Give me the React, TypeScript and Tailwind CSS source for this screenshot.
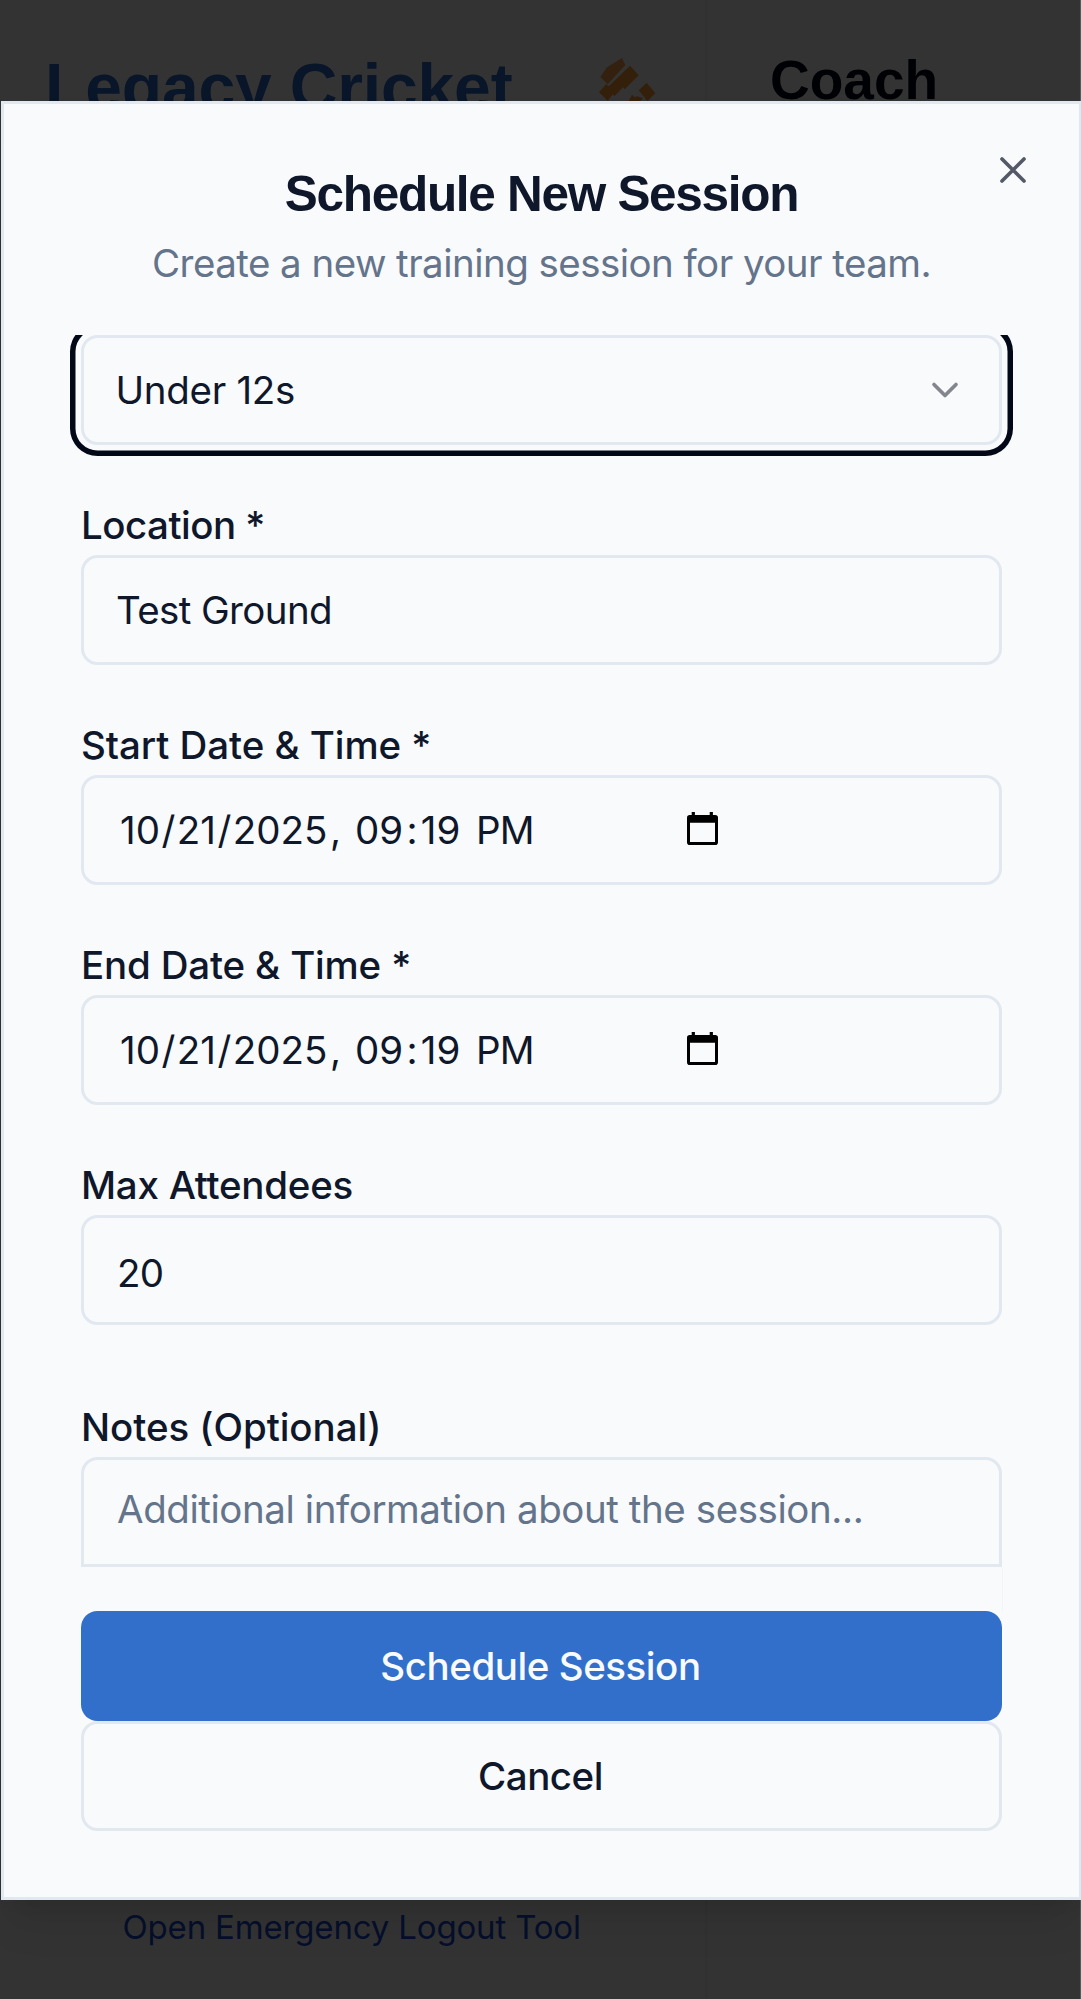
import React from 'react';

const boxBase = 'flex h-[110px] w-full items-center border-[3px] border-[#e2e8f0] bg-[#f9fafc]';

function Field({ label, tracking, children }: { label: string; tracking: string; children: React.ReactNode }) {
  return (
    <div className="flex flex-col gap-[11px]">
      <label className={`h-[38px] text-[38.5px] leading-[38px] font-medium whitespace-pre ${tracking}`}>{label}</label>
      {children}
    </div>
  );
}

function CalendarIcon() {
  return (
    <svg width="31" height="33" viewBox="0 0 31 33" className="mt-[-3px] block shrink-0">
      <path
        fillRule="evenodd"
        d="M4.7 0h3.2v3h14.8V0h3.2v3h2.3a2.8 2.8 0 0 1 2.8 2.8v24.4a2.8 2.8 0 0 1-2.8 2.8H2.8A2.8 2.8 0 0 1 0 30.2V5.8A2.8 2.8 0 0 1 2.8 3h1.9zM3 10.7V30h25V10.7z"
        fill="#000"
      />
    </svg>
  );
}

function DateBox() {
  return (
    <div className={`${boxBase} rounded-[16.5px] pl-[36px] text-[38.5px] leading-[55px]`}>
      <span className="w-[235px] shrink-0 whitespace-nowrap">
        10<span className="mx-[1.5px]">/</span>21<span className="mx-[1.5px]">/</span>2025<span className="ml-[2.5px]">,</span>
      </span>
      <span className="w-[121px] shrink-0 whitespace-nowrap">
        09<span className="mx-[3.3px]">:</span>19
      </span>
      <span className="w-[211px] shrink-0 tracking-[-0.9px]">PM</span>
      <CalendarIcon />
    </div>
  );
}

function CricketIcon() {
  return (
    <svg width="80" height="54" viewBox="0 0 240 162" fill="#ff9b35" className="mt-[50px] block">
      <path fill="#ffa04b" d="M93 24 103 45 50 103 28 81 48 52z" />
      <path d="M117 47 143 76 101 118 96 112 71 138 65 134 50 152 24 127 45 103 54 108z" />
      <path d="M167 98 193 130 169 153 143 121z" />
      <path d="M110 160 123 134 133 143 136 138 156 144 142 160z" />
    </svg>
  );
}

export default function App() {
  return (
    <div className="relative h-[1999px] w-[1081px] overflow-hidden bg-white font-['Inter',sans-serif] text-[#0f172a]">
      <div className="flex h-full">
        <aside className="flex w-[707px] flex-col justify-between border-r-2 border-[#f6f6f6]">
          <div className="flex h-[200px] items-start justify-between pr-[34.5px] pl-[45px]">
            <h1 className="mt-[47px] font-['Liberation_Sans',sans-serif] text-[66px] leading-[80px] font-bold tracking-[-0.15px] whitespace-nowrap text-[#2e6fcb]">
              Legacy Cricket
            </h1>
            <CricketIcon />
          </div>
          <a className="mb-[50px] ml-[122.5px] text-[33px] leading-[44px] tracking-[-0.17px] whitespace-nowrap text-[#1d4ed8]">
            Open Emergency Logout Tool
          </a>
        </aside>
        <section className="pt-[47px] pl-[63px]">
          <h2 className="font-['Liberation_Sans',sans-serif] text-[55px] leading-[66px] font-bold text-[#020817]">Coach</h2>
        </section>
      </div>

      <div className="absolute inset-0 flex">
        <div className="flex-1 bg-black/80" />
        <div className="w-px bg-black/65" />
      </div>

      <div
        role="dialog"
        className="absolute top-[101px] left-px flex h-[1799px] w-[1081px] flex-col border-[3px] border-[#e2e8f0] bg-[#f9fafc] px-[77px] pt-[65px] shadow-[0_27px_41px_-8px_rgba(0,0,0,0.1),0_11px_16px_-11px_rgba(0,0,0,0.1)]"
      >
        <button className="absolute top-[44px] right-[44px] block h-[44px] w-[44px]">
          <svg width="44" height="44" viewBox="0 0 24 24" fill="none" stroke="#535966" strokeWidth="2" strokeLinecap="round" className="block">
            <path d="M18 6 6 18M6 6l12 12" />
          </svg>
        </button>
        <header className="flex w-[921px] shrink-0 flex-col text-center">
          <h2 className="font-['Liberation_Sans',sans-serif] text-[49.5px] leading-[50px] font-bold tracking-[-1.29px] whitespace-nowrap">
            Schedule New Session
          </h2>
          <p className="mt-[17px] text-[38.5px] leading-[55px] tracking-[-0.545px] whitespace-nowrap text-[#64748b]">
            Create a new training session for your team.
          </p>
        </header>

        <div className="mx-[-20px] mt-[44px] h-[1232px] w-[961px] shrink-0 overflow-hidden px-[20px]">
          <div className="flex flex-col gap-[61px]">
            <div
              className={`${boxBase} justify-between rounded-[16.5px] pr-[32.5px] pl-[31.5px] text-[38.5px] leading-[55px] shadow-[0_0_0_5.5px_#f9fafc,0_0_0_11px_#020817]`}
            >
              <span className="tracking-[-0.3px]">Under 12s</span>
              <svg width="44" height="44" viewBox="0 0 24 24" fill="none" stroke="#83868f" strokeWidth="2" strokeLinecap="round" strokeLinejoin="round" className="block">
                <path d="m6 9 6 6 6-6" />
              </svg>
            </div>
            <Field label="Location *" tracking="tracking-[-0.52px]">
              <div className={`${boxBase} rounded-[16.5px] pl-[32px] text-[38.5px] leading-[55px] tracking-[-0.62px]`}>Test Ground</div>
            </Field>
            <Field label="Start Date & Time *" tracking="tracking-[-0.07px]">
              <DateBox />
            </Field>
            <Field label="End Date & Time *" tracking="tracking-[-0.18px]">
              <DateBox />
            </Field>
            <Field label="Max Attendees" tracking="tracking-[-0.27px]">
              <div className={`${boxBase} rounded-[16.5px] pt-[6px] pl-[33px] text-[38.5px] leading-[55px] tracking-[-0.68px]`}>20</div>
            </Field>
            <div className="mt-[22px]">
              <Field label="Notes (Optional)" tracking="tracking-[-0.06px]">
                <div
                  className={`${boxBase} rounded-t-[16.5px] pb-[6px] pl-[33px] text-[38.5px] leading-[55px] tracking-[-0.43px] whitespace-nowrap text-[#64748b]`}
                >
                  Additional information about the session...
                </div>
              </Field>
            </div>
          </div>
        </div>

        <div className="h-[44px] w-[922px] shrink-0 border-r border-[#f1f4f8]" />
        <footer className="flex w-[921px] flex-col">
          <button className="h-[110px] rounded-[16.5px] bg-[#326fcb] pr-[2px] text-[38.5px] leading-[55px] font-medium tracking-[-0.45px] text-[#f8fafc]">
            Schedule Session
          </button>
          <button className="h-[110px] rounded-[16.5px] border-[3px] border-[#e2e8f0] pr-[2px] text-[38.5px] leading-[55px] font-medium tracking-[-0.5px]">
            Cancel
          </button>
        </footer>
      </div>
    </div>
  );
}
